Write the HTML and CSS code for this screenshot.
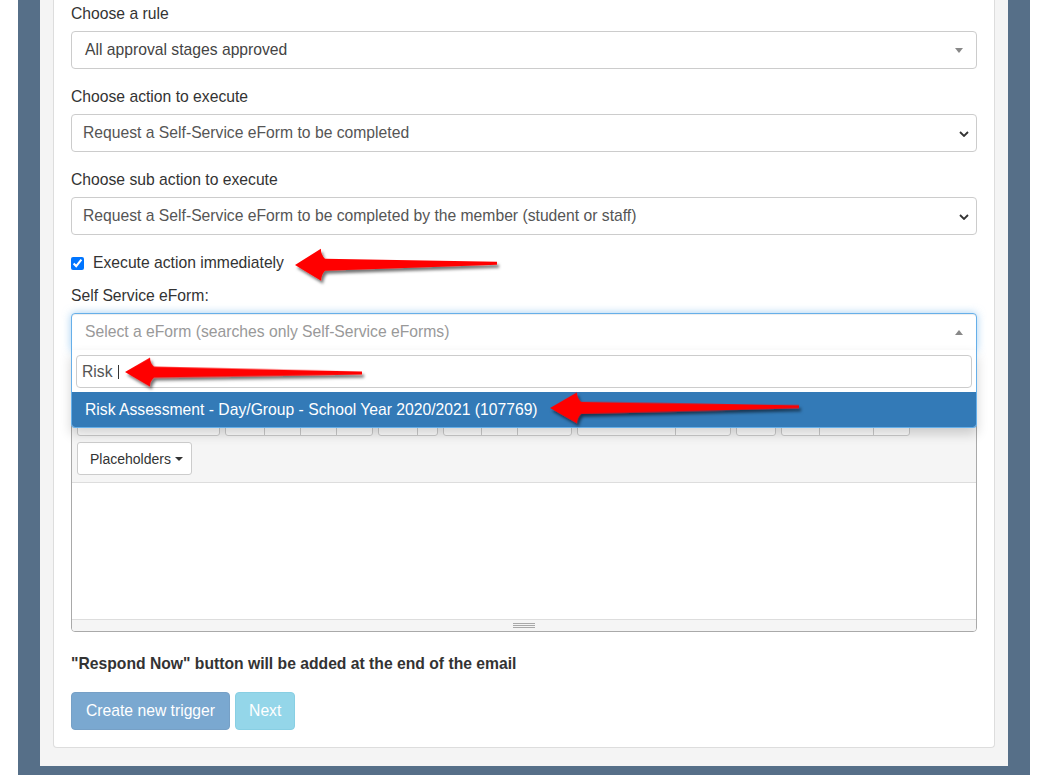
FILE: index.html
```html
<!DOCTYPE html>
<html lang="en">
<head>
<meta charset="utf-8">
<title>Create trigger</title>
<link rel="stylesheet" href="styles.css">
</head>
<body>
<div class="frame">
  <div class="panel">
    <div class="card">
      <div class="form-group">
        <label class="lbl">Choose a rule</label>
        <div class="s2"><span class="s2-text">All approval stages approved</span><span class="s2-arrow"></span></div>
      </div>
      <div class="form-group">
        <label class="lbl">Choose action to execute</label>
        <div class="fc"><span>Request a Self-Service eForm to be completed</span>
          <svg class="chev" width="10" height="6" viewBox="0 0 10 6"><path d="M1 1 L5 5 L9 1" fill="none" stroke="#333" stroke-width="1.8"/></svg></div>
      </div>
      <div class="form-group">
        <label class="lbl">Choose sub action to execute</label>
        <div class="fc"><span>Request a Self-Service eForm to be completed by the member (student or staff)</span>
          <svg class="chev" width="10" height="6" viewBox="0 0 10 6"><path d="M1 1 L5 5 L9 1" fill="none" stroke="#333" stroke-width="1.8"/></svg></div>
      </div>
      <div class="check-row">
        <input type="checkbox" id="exec" class="chk" checked>
        <label for="exec">Execute action immediately</label>
      </div>
      <div class="form-group">
        <label class="lbl">Self Service eForm:</label>
        <div class="s2-wrap">
          <div class="s2 s2-open"><span class="s2-text placeholder">Select a eForm (searches only Self-Service eForms)</span><span class="s2-arrow up"></span></div>
          <div class="s2-dropdown">
            <div class="s2-search"><div class="s2-input">Risk<span class="cursor"></span></div></div>
            <ul class="s2-results"><li class="s2-opt hl">Risk Assessment - Day/Group - School Year 2020/2021 (107769)</li></ul>
          </div>
        </div>
      </div>
      <div class="editor">
        <div class="toolbar">
          <div class="tb-row first">
            <div class="tb-group"><span class="tb-btn w141"></span></div>
            <div class="tb-group"><span class="tb-btn w38"></span><span class="tb-btn w36"></span><span class="tb-btn w36"></span><span class="tb-btn w36"></span></div>
            <div class="tb-group"><span class="tb-btn w38"></span><span class="tb-btn w20"></span></div>
            <div class="tb-group"><span class="tb-btn w37"></span><span class="tb-btn w36"></span><span class="tb-btn w54"></span></div>
            <div class="tb-group"><span class="tb-btn w97"></span><span class="tb-btn w55"></span></div>
            <div class="tb-group"><span class="tb-btn w38"></span></div>
            <div class="tb-group"><span class="tb-btn w37"></span><span class="tb-btn w54"></span><span class="tb-btn w36"></span></div>
          </div>
          <div class="tb-row second">
            <button class="ph-btn" type="button">Placeholders <span class="caret"></span></button>
          </div>
        </div>
        <div class="edit-area"></div>
        <div class="statusbar"><div class="grip"><i></i><i></i><i></i></div></div>
      </div>
      <p class="note">"Respond Now" button will be added at the end of the email</p>
      <div class="actions">
        <button class="btn btn-primary" type="button">Create new trigger</button>
        <button class="btn btn-info" type="button">Next</button>
      </div>
    </div>
  </div>
</div>
<svg class="arrows" width="1039" height="775" viewBox="0 0 1039 775">
  <defs>
    <filter id="sh" x="-10%" y="-50%" width="130%" height="250%">
      <feDropShadow dx="2" dy="3" stdDeviation="1.6" flood-color="#000" flood-opacity="0.55"/>
    </filter>
  </defs>
  <g filter="url(#sh)" fill="#ff0000">
    <path transform="translate(295 265) rotate(-0.5)" d="M0,0 L26,-16 Q26,-10 30,-6 L202,-1.6 L202,1.6 L30,6 Q26,10 26,16 Z"/>
    <path transform="translate(125 372) rotate(0.25)" d="M0,0 L25,-14.5 Q25,-9 29,-5.5 L237,-1.6 L237,1.6 L29,5.5 Q25,9 25,14.5 Z"/>
    <path transform="translate(550 408) rotate(-0.3)" d="M0,0 L27,-15.5 Q27,-10 31,-6 L249,-1.6 L249,1.6 L31,6 Q27,10 27,15.5 Z"/>
  </g>
</svg>
</body>
</html>
```

FILE: styles.css
```css
* { box-sizing: border-box; }

html, body {
  margin: 0;
  padding: 0;
  height: 775px;
  overflow: hidden;
  background: #fff;
}

body {
  position: relative;
  font-family: "Liberation Sans", Arial, sans-serif;
  font-size: 15.7px;
  line-height: 22px;
  color: #333;
}

.frame {
  margin-left: 18px;
  width: 1012px;
  height: 775px;
  background: #566f88;
  padding: 0 22px;
}

.panel {
  background: #f4f4f4;
  padding: 0 13px 18px;
}

.card {
  background: #fff;
  border: 1px solid #ddd;
  border-top: 0;
  border-radius: 0 0 4px 4px;
  padding: 3px 17px 17px;
}

.form-group { margin-bottom: 17px; }

.lbl {
  display: block;
  font-weight: normal;
  margin-bottom: 6px;
  color: #333;
}

.s2, .fc {
  height: 38px;
  border: 1px solid #ccc;
  border-radius: 4px;
  background: #fff;
  display: flex;
  align-items: center;
  justify-content: space-between;
}

.s2 {
  padding: 0 13px 0 13px;
  color: #444;
}

.fc {
  padding: 0 7px 0 11px;
  color: #555;
}

.chev { display: block; margin-top: 1px; }

.s2-arrow {
  width: 0;
  height: 0;
  border-style: solid;
  border-width: 5px 4px 0 4px;
  border-color: #888 transparent transparent transparent;
  margin-top: 1px;
}

.s2-arrow.up {
  border-width: 0 4px 5px 4px;
  border-color: transparent transparent #888 transparent;
}

.placeholder { color: #999; }

.check-row {
  display: flex;
  align-items: center;
  height: 22px;
  margin-bottom: 11px;
}

.chk {
  width: 13px;
  height: 13px;
  margin: 1px 9px 0 0;
}

.s2-wrap { position: relative; }

.s2-open {
  border-color: #66afe9;
  border-radius: 4px 4px 0 0;
  box-shadow: inset 0 1px 1px rgba(0,0,0,.075), 0 0 8px rgba(102,175,233,.6);
}

.s2-dropdown {
  position: absolute;
  top: 37px;
  left: 0;
  right: 0;
  z-index: 10;
  background: #fff;
  border: 1px solid #66afe9;
  border-top: 0;
  border-radius: 0 0 4px 4px;
  box-shadow: 0 6px 12px rgba(0,0,0,.175);
}

.s2-search { padding: 5px 4px 4px; }

.s2-input {
  height: 33px;
  border: 1px solid #ccc;
  border-radius: 4px;
  padding: 0 5px;
  display: flex;
  align-items: center;
  color: #555;
}

.cursor {
  display: inline-block;
  width: 1px;
  height: 14px;
  background: #333;
  margin-left: 5px;
}

.s2-results {
  list-style: none;
  margin: 0;
  padding: 0;
}

.s2-opt {
  padding: 7px 13px 6px;
  line-height: 22px;
}

.s2-opt.hl {
  background: #337ab7;
  color: #fff;
  border-radius: 0 0 3px 3px;
}

.editor {
  margin-top: 47px;
  border: 1px solid #a9a9a9;
  border-radius: 4px;
  overflow: hidden;
}

.toolbar {
  background: #f5f5f5;
  border-bottom: 1px solid #ddd;
  padding: 0 5px 7px;
}

.tb-row { display: flex; }
.tb-row.first { margin-top: 5px; }
.tb-row.second { margin-top: 6px; }

.tb-group {
  display: flex;
  border: 1px solid #ccc;
  border-radius: 3px;
  background: #fff;
  margin-right: 5px;
  height: 32px;
}

.tb-btn {
  display: block;
  height: 30px;
  border-left: 1px solid #ccc;
}
.tb-btn:first-child { border-left: 0; }

.w20 { width: 20px; }
.w36 { width: 36px; }
.w37 { width: 37px; }
.w38 { width: 38px; }
.w54 { width: 54px; }
.w55 { width: 55px; }
.w97 { width: 97px; }
.w141 { width: 141px; }

.ph-btn {
  height: 33px;
  width: 115px;
  border: 1px solid #ccc;
  border-radius: 3px;
  background: #fff;
  font-family: "Liberation Sans", Arial, sans-serif;
  font-size: 14px;
  color: #333;
  padding: 0 0 0 12px;
  text-align: left;
  display: flex;
  align-items: center;
}

.caret {
  display: inline-block;
  width: 0;
  height: 0;
  margin-left: 4px;
  border-top: 4px solid #333;
  border-left: 4px solid transparent;
  border-right: 4px solid transparent;
}

.edit-area {
  height: 136px;
  background: #fff;
}

.statusbar {
  height: 12px;
  background: #f5f5f5;
  border-top: 1px solid #ddd;
  display: flex;
  justify-content: center;
}

.grip {
  width: 22px;
  margin-top: 3px;
}

.grip i {
  display: block;
  height: 1px;
  background: #a9a9a9;
  margin-bottom: 1px;
}

.note {
  margin: 21px 0 17px;
  font-weight: bold;
  color: #333;
}

.actions {
  display: flex;
  gap: 5px;
}

.btn {
  height: 38px;
  padding: 0 14px;
  border: 1px solid transparent;
  border-radius: 4px;
  font-family: "Liberation Sans", Arial, sans-serif;
  font-size: 15.7px;
  color: #fff;
}

.btn-primary {
  background: rgb(122, 168, 208);
  border-color: rgb(118, 160, 198);
}

.btn-info {
  background: rgb(148, 214, 233);
  border-color: rgb(136, 207, 227);
  padding: 0 13px;
}

.arrows {
  position: absolute;
  top: 0;
  left: 0;
  z-index: 100;
  pointer-events: none;
}
```
